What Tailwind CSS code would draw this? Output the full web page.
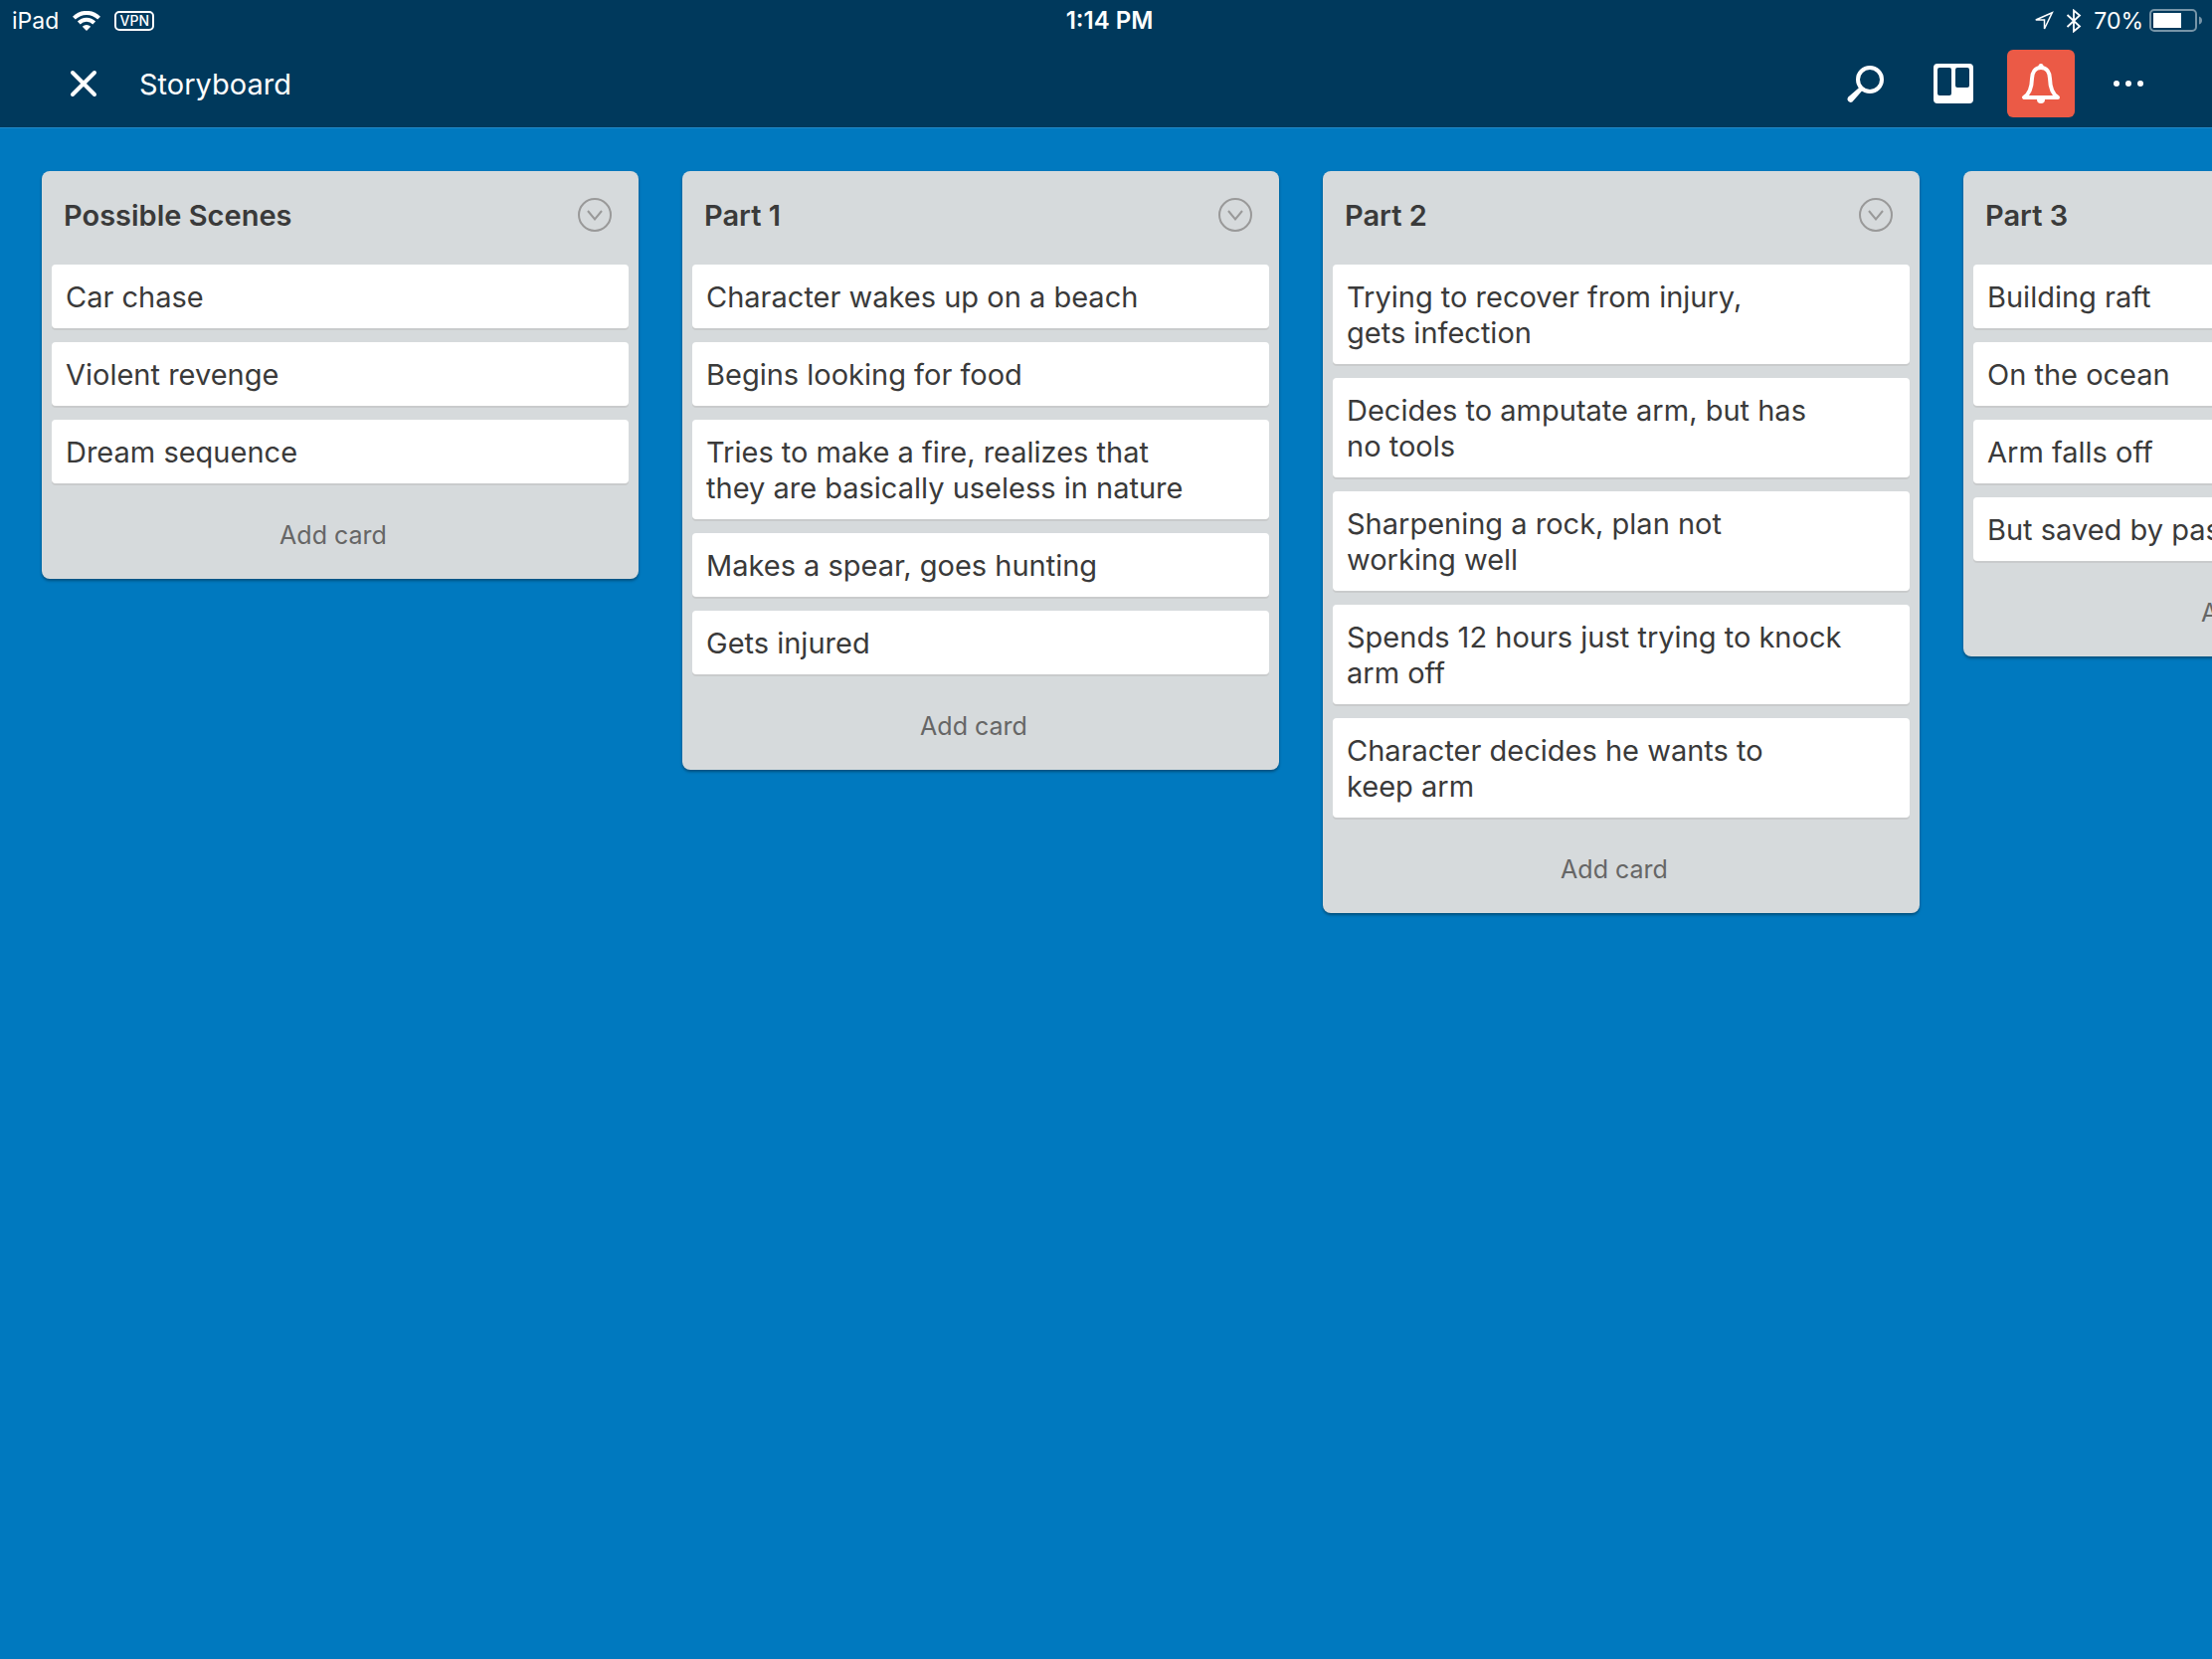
<!DOCTYPE html>
<html lang="en">
<head>
<meta charset="utf-8">
<meta name="viewport" content="width=device-width, initial-scale=1">
<title>Storyboard</title>
<script src="https://cdn.jsdelivr.net/npm/@tailwindcss/browser@4"></script>
</head>
<body class="flex min-h-screen flex-col bg-[#0079bf] font-['Inter',sans-serif] text-[#3a3a3a]">

<header class="border-b border-[#2189c9] bg-[#00395c] text-white">
  <!-- Status bar -->
  <div class="grid h-10 grid-cols-3 items-center pt-[2px] pr-[9px] pl-3 text-[23px] leading-7">
    <div class="flex items-center gap-[14px]">
      <span>iPad</span>
      <svg class="h-5 w-7" viewBox="0 0 28 20" fill="none" stroke="#fff" stroke-width="4" role="img" aria-label="Wi-Fi">
        <path d="M1.4 7.2a17.6 17.6 0 0 1 25.2 0"/>
        <path d="M6.3 12a10.8 10.8 0 0 1 15.4 0"/>
        <path d="M14 20l-4.2-4.3a6 6 0 0 1 8.400 0z" fill="#fff" stroke="none"/>
      </svg>
      <span class="flex h-5 w-10 items-center justify-center rounded-[5px] border-2 border-white text-[14px] leading-4 font-medium">VPN</span>
    </div>
    <div class="pl-1 text-center text-[24px] font-semibold">1:14 PM</div>
    <div class="flex items-center justify-end gap-3">
      <svg class="h-5 w-5" viewBox="0 0 20 20" fill="none" stroke="#fff" stroke-width="1.500" role="img" aria-label="Location">
        <path d="M18.300 1.700L1.800 9h8.700v9z"/>
      </svg>
      <svg class="h-6 w-4" viewBox="0 0 16 24" fill="none" stroke="#fff" stroke-width="1.800" role="img" aria-label="Bluetooth">
        <path d="M1.500 6l12.500 11.500-6 5V1.500l6 5L1.500 18"/>
      </svg>
      <div class="flex items-center gap-[6px]">
        <span>70%</span>
        <svg class="h-6 w-[54px]" viewBox="0 0 54 24" fill="none" role="img" aria-label="Battery">
          <rect x="1" y="1" width="46" height="21" rx="4" stroke="#7795a8" stroke-width="2"/>
          <rect x="4" y="4" width="28" height="15" fill="#fff"/>
          <path d="M50 7.500q3 1 3 4t-3 4z" fill="#7795a8"/>
        </svg>
      </div>
    </div>
  </div>

  <!-- Board toolbar -->
  <div class="flex h-[88px] items-center px-[50px]">
    <button type="button" aria-label="Close" class="size-[68px]">
      <svg class="size-full" viewBox="0 0 68 68" stroke="#fff" stroke-width="4" stroke-linecap="round"><path d="M23 23l22 22M45 23L23 45"/></svg>
    </button>
    <h1 class="ml-[22px] pt-[2px] text-[29px] leading-9">Storyboard</h1>
    <nav class="ml-auto flex gap-5">
      <button type="button" aria-label="Search" class="size-[68px]">
        <svg class="size-full" viewBox="0 0 68 68" fill="none">
          <circle cx="38" cy="30" r="12" stroke="#fff" stroke-width="4"/>
          <path d="M27 38.200L16 47.800a3.300 3.300 0 0 0 4.300 4.700L30 41.500l1.500-3-2-1.800z" fill="#fff"/>
        </svg>
      </button>
      <button type="button" aria-label="Boards" class="size-[68px]">
        <svg class="size-full" viewBox="0 0 68 68">
          <path fill="#fff" fill-rule="evenodd" d="M18 14h32a4 4 0 0 1 4 4v32a4 4 0 0 1-4 4H18a4 4 0 0 1-4-4V18a4 4 0 0 1 4-4zM20 18a2 2 0 0 0-2 2v24a2 2 0 0 0 2 2h10a2 2 0 0 0 2-2V20a2 2 0 0 0-2-2zM38 18a2 2 0 0 0-2 2v16a2 2 0 0 0 2 2h10a2 2 0 0 0 2-2V20a2 2 0 0 0-2-2z"/>
        </svg>
      </button>
      <button type="button" aria-label="Notifications" class="size-[68px] rounded-[6px] bg-[#eb5a46]">
        <svg class="size-full" viewBox="0 0 68 68" fill="none">
          <path d="M34 18c-6 0-8.800 5-9 11-.200 9-2 15-8 19h34c-6-4-7.800-10-8-19-.200-6-3-11-9-11z" stroke="#fff" stroke-width="4" stroke-linejoin="round"/>
          <circle cx="34" cy="16.500" r="2.500" fill="#fff"/>
          <path d="M30 49h8v1a4 4 0 0 1-8 0z" fill="#fff"/>
        </svg>
      </button>
      <button type="button" aria-label="More" class="size-[68px]">
        <svg class="size-full" viewBox="0 0 68 68" fill="#fff"><circle cx="22" cy="34" r="3"/><circle cx="34" cy="34" r="3"/><circle cx="46" cy="34" r="3"/></svg>
      </button>
    </nav>
  </div>
</header>

<main class="flex flex-1 items-start gap-11 overflow-x-auto px-[42px] pt-[43px] pb-10 [scrollbar-width:none]">

  <section class="w-[600px] shrink-0 rounded-lg bg-[#d6dadc] px-[10px] shadow-[0_2px_3px_rgba(0,0,0,0.35)]">
    <div class="flex h-[94px] items-center justify-between pr-[17px] pb-[6px] pl-3">
      <h2 class="pt-[2px] text-[29px] leading-9 font-semibold">Possible Scenes</h2>
      <button type="button" aria-label="List actions for Possible Scenes" class="size-[34px]">
        <svg class="size-full" viewBox="0 0 34 34" fill="none" stroke="#999" stroke-width="2"><circle cx="17" cy="17" r="16"/><path d="M10 13l7 8.500 7-8.500"/></svg>
      </button>
    </div>
    <ul class="flex flex-col gap-[14px] text-[29px] leading-9">
      <li class="rounded-[4px] bg-white px-[14px] pt-[15px] pb-[13px] shadow-[0_2px_0_#c9cbcc]">Car chase</li>
      <li class="rounded-[4px] bg-white px-[14px] pt-[15px] pb-[13px] shadow-[0_2px_0_#c9cbcc]">Violent revenge</li>
      <li class="rounded-[4px] bg-white px-[14px] pt-[15px] pb-[13px] shadow-[0_2px_0_#c9cbcc]">Dream sequence</li>
    </ul>
    <button type="button" class="h-[96px] w-full pt-2 pr-[14px] text-[25px] leading-8 text-[#666]">Add card</button>
  </section>

  <section class="w-[600px] shrink-0 rounded-lg bg-[#d6dadc] px-[10px] shadow-[0_2px_3px_rgba(0,0,0,0.35)]">
    <div class="flex h-[94px] items-center justify-between pr-[17px] pb-[6px] pl-3">
      <h2 class="pt-[2px] text-[29px] leading-9 font-semibold">Part 1</h2>
      <button type="button" aria-label="List actions for Part 1" class="size-[34px]">
        <svg class="size-full" viewBox="0 0 34 34" fill="none" stroke="#999" stroke-width="2"><circle cx="17" cy="17" r="16"/><path d="M10 13l7 8.500 7-8.500"/></svg>
      </button>
    </div>
    <ul class="flex flex-col gap-[14px] text-[29px] leading-9">
      <li class="rounded-[4px] bg-white px-[14px] pt-[15px] pb-[13px] shadow-[0_2px_0_#c9cbcc]">Character wakes up on a beach</li>
      <li class="rounded-[4px] bg-white px-[14px] pt-[15px] pb-[13px] shadow-[0_2px_0_#c9cbcc]">Begins looking for food</li>
      <li class="rounded-[4px] bg-white px-[14px] pt-[15px] pb-[13px] shadow-[0_2px_0_#c9cbcc]">Tries to make a fire, realizes that<br>they are basically useless in nature</li>
      <li class="rounded-[4px] bg-white px-[14px] pt-[15px] pb-[13px] shadow-[0_2px_0_#c9cbcc]">Makes a spear, goes hunting</li>
      <li class="rounded-[4px] bg-white px-[14px] pt-[15px] pb-[13px] shadow-[0_2px_0_#c9cbcc]">Gets injured</li>
    </ul>
    <button type="button" class="h-[96px] w-full pt-2 pr-[14px] text-[25px] leading-8 text-[#666]">Add card</button>
  </section>

  <section class="w-[600px] shrink-0 rounded-lg bg-[#d6dadc] px-[10px] shadow-[0_2px_3px_rgba(0,0,0,0.35)]">
    <div class="flex h-[94px] items-center justify-between pr-[17px] pb-[6px] pl-3">
      <h2 class="pt-[2px] text-[29px] leading-9 font-semibold">Part 2</h2>
      <button type="button" aria-label="List actions for Part 2" class="size-[34px]">
        <svg class="size-full" viewBox="0 0 34 34" fill="none" stroke="#999" stroke-width="2"><circle cx="17" cy="17" r="16"/><path d="M10 13l7 8.500 7-8.500"/></svg>
      </button>
    </div>
    <ul class="flex flex-col gap-[14px] text-[29px] leading-9">
      <li class="rounded-[4px] bg-white px-[14px] pt-[15px] pb-[13px] shadow-[0_2px_0_#c9cbcc]">Trying to recover from injury,<br>gets infection</li>
      <li class="rounded-[4px] bg-white px-[14px] pt-[15px] pb-[13px] shadow-[0_2px_0_#c9cbcc]">Decides to amputate arm, but has<br>no tools</li>
      <li class="rounded-[4px] bg-white px-[14px] pt-[15px] pb-[13px] shadow-[0_2px_0_#c9cbcc]">Sharpening a rock, plan not<br>working well</li>
      <li class="rounded-[4px] bg-white px-[14px] pt-[15px] pb-[13px] shadow-[0_2px_0_#c9cbcc]">Spends 12 hours just trying to knock<br>arm off</li>
      <li class="rounded-[4px] bg-white px-[14px] pt-[15px] pb-[13px] shadow-[0_2px_0_#c9cbcc]">Character decides he wants to<br>keep arm</li>
    </ul>
    <button type="button" class="h-[96px] w-full pt-2 pr-[14px] text-[25px] leading-8 text-[#666]">Add card</button>
  </section>

  <section class="w-[600px] shrink-0 rounded-lg bg-[#d6dadc] px-[10px] shadow-[0_2px_3px_rgba(0,0,0,0.35)]">
    <div class="flex h-[94px] items-center justify-between pr-[17px] pb-[6px] pl-3">
      <h2 class="pt-[2px] text-[29px] leading-9 font-semibold">Part 3</h2>
      <button type="button" aria-label="List actions for Part 3" class="size-[34px]">
        <svg class="size-full" viewBox="0 0 34 34" fill="none" stroke="#999" stroke-width="2"><circle cx="17" cy="17" r="16"/><path d="M10 13l7 8.500 7-8.500"/></svg>
      </button>
    </div>
    <ul class="flex flex-col gap-[14px] text-[29px] leading-9">
      <li class="rounded-[4px] bg-white px-[14px] pt-[15px] pb-[13px] shadow-[0_2px_0_#c9cbcc]">Building raft</li>
      <li class="rounded-[4px] bg-white px-[14px] pt-[15px] pb-[13px] shadow-[0_2px_0_#c9cbcc]">On the ocean</li>
      <li class="rounded-[4px] bg-white px-[14px] pt-[15px] pb-[13px] shadow-[0_2px_0_#c9cbcc]">Arm falls off</li>
      <li class="rounded-[4px] bg-white px-[14px] pt-[15px] pb-[13px] shadow-[0_2px_0_#c9cbcc]">But saved by passing ship</li>
    </ul>
    <button type="button" class="h-[96px] w-full pt-2 pr-[14px] text-[25px] leading-8 text-[#666]">Add card</button>
  </section>
</main>
</body>
</html>
